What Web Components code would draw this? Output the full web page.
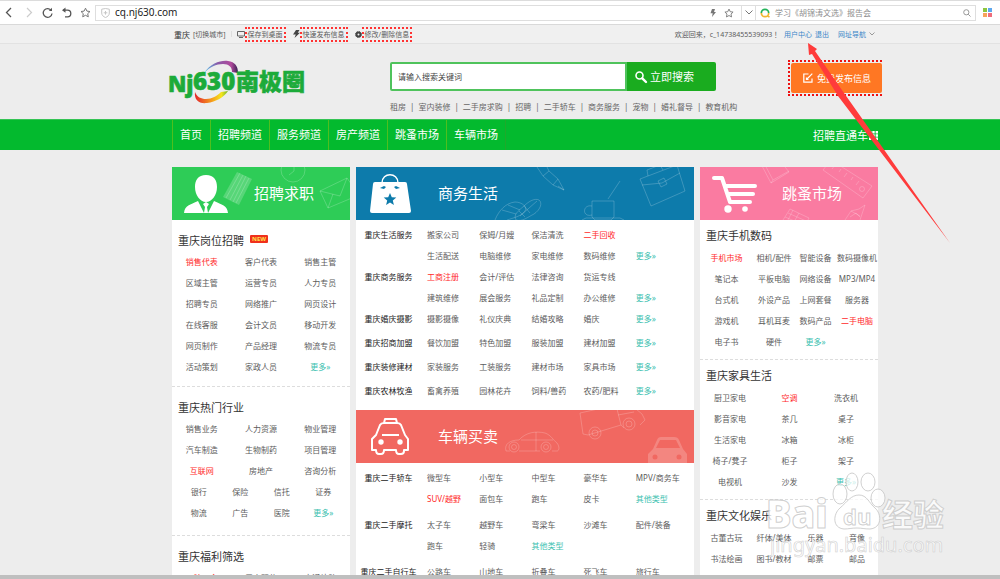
<!DOCTYPE html>
<html lang="zh-CN">
<head>
<meta charset="utf-8">
<title>重庆南极圈</title>
<style>
    html, body { height: 100%; }
    body {
        margin: 0;
        display: flex;
        flex-direction: column;
        overflow: hidden;
        background: #ededed;
        color: #5c5c5c;
        font: 8px/21px "Noto Sans", "Noto Sans CJK SC", sans-serif;
        --side: 172px;
        --end: 122px;
    }
    main {
        flex: 1;
        min-height: 0;
        overflow: hidden;
        border-bottom: 4px solid #bfbfbf;
    }
    .columns {
        display: grid;
        grid-template-columns: 178fr 338fr 178fr;
        gap: 6px;
        padding: 17px var(--end) 0 var(--side);
    }
</style>
</head>
<body>
<browser-bar></browser-bar>
<top-bar></top-bar>
<main>
    <site-header></site-header>
    <site-nav></site-nav>
    <div class="columns">
        <channel-panel kind="jobs" name="招聘求职">
            <link-section name="重庆岗位招聘" badge="NEW">
                <link-grid cols="1fr 1fr 1fr" items="*销售代表 客户代表 销售主管 区域主管 运营专员 人力专员 招聘专员 网络推广 网页设计 在线客服 会计文员 移动开发 网页制作 产品经理 物流专员 活动策划 家政人员 +更多»"></link-grid>
            </link-section>
            <link-section name="重庆热门行业">
                <link-grid cols="1fr 1fr 1fr" items="销售业务 人力资源 物业管理 汽车制造 生物制药 项目管理 *互联网 房地产 咨询分析"></link-grid>
                <link-grid class="inset" cols="1fr 1fr 1fr 1fr" items="银行 保险 信托 证券 物流 广告 医院 +更多»"></link-grid>
            </link-section>
            <link-section name="重庆福利筛选">
                <link-grid cols="1fr 1fr 1fr" items="*五险一金 周末双休 交通补助"></link-grid>
            </link-section>
        </channel-panel>
        <div>
            <channel-panel kind="business" name="商务生活">
                <service-list>
                    <service-row name="重庆生活服务" items="搬家公司 保姆/月嫂 保洁清洗 *二手回收 - 生活配送 电脑维修 家电维修 数码维修 +更多»"></service-row>
                    <service-row name="重庆商务服务" items="*工商注册 会计/评估 法律咨询 货运专线 - 建筑维修 展会服务 礼品定制 办公维修 +更多»"></service-row>
                    <service-row class="single" name="重庆婚庆摄影" items="摄影摄像 礼仪庆典 结婚攻略 婚庆 +更多»"></service-row>
                    <service-row class="single" name="重庆招商加盟" items="餐饮加盟 特色加盟 服装加盟 建材加盟 +更多»"></service-row>
                    <service-row class="single" name="重庆装修建材" items="家装服务 工装服务 建材市场 家具市场 +更多»"></service-row>
                    <service-row class="single" name="重庆农林牧渔" items="畜禽养殖 园林花卉 饲料/兽药 农药/肥料 +更多»"></service-row>
                </service-list>
            </channel-panel>
            <channel-panel kind="cars" name="车辆买卖">
                <service-list>
                    <service-row class="roomy" name="重庆二手轿车" items="微型车 小型车 中型车 豪华车 MPV/商务车 *SUV/越野 面包车 跑车 皮卡 +其他类型"></service-row>
                    <service-row class="roomy" name="重庆二手摩托" items="太子车 越野车 弯梁车 沙滩车 配件/装备 跑车 轻骑 +其他类型"></service-row>
                    <service-row class="roomy" name="重庆二手自行车" items="公路车 山地车 折叠车 死飞车 旅行车"></service-row>
                </service-list>
            </channel-panel>
        </div>
        <channel-panel kind="market" name="跳蚤市场">
            <link-section class="tight" name="重庆手机数码">
                <link-grid cols="53fr 42fr 41fr 42fr" items="*手机市场 相机/配件 智能设备 数码摄像机 笔记本 平板电脑 网络设备 MP3/MP4 台式机 外设产品 上网套餐 服务器 游戏机 耳机耳麦 数码产品 *二手电脑 电子书 硬件 +更多»"></link-grid>
            </link-section>
            <link-section class="tight" name="重庆家具生活">
                <link-grid cols="60fr 59fr 54fr 5fr" items="厨卫家电 *空调 洗衣机 - 影音家电 茶几 桌子 - 生活家电 冰箱 冰柜 - 椅子/凳子 柜子 架子 - 电视机 沙发 +更多»"></link-grid>
            </link-section>
            <link-section class="tight" name="重庆文化娱乐">
                <link-grid cols="53fr 42fr 41fr 42fr" items="古董古玩 纤体/美体 乐器 音像 书法绘画 图书/教材 邮票 邮品"></link-grid>
            </link-section>
        </channel-panel>
    </div>
</main>
<pointer-arrow></pointer-arrow>
<water-mark></water-mark>

<script>
const html = String.raw;

const base = html`
    <style>
        :host { display: block; box-sizing: border-box; }
        * { box-sizing: border-box; }
        a { color: inherit; text-decoration: none; white-space: nowrap; }
        svg { display: block; flex: none; overflow: visible; }
        button, input { font: inherit; margin: 0; }
    </style>
`;

class View extends HTMLElement {
    constructor() {
        super();
        this.attachShadow({mode: 'open'});
    }

    connectedCallback() {
        this.shadowRoot.innerHTML = base + this.render();
    }
}

// "*" marks a hot link, "+" a "more" link, "-" leaves a cell empty
function linkList(items) {
    return items.split(' ').map(item => {
        if (item === '-')
            return '<span></span>';
        const cls = {'*': 'hot', '+': 'more'}[item[0]];
        const text = cls ? item.slice(1) : item;
        return `<a href="#" class="${cls || ''}">${text}</a>`;
    }).join('');
}

customElements.define('browser-bar', class extends View {
    render() {
        return html`
            <style>
                :host { background: white; border-top: 1px solid #dcdcdc; border-bottom: 1px solid #d9d9d9; }
                .bar { display: flex; align-items: center; height: 23px; padding: 0 8px 0 4px; color: #777; }
                .tools { display: flex; gap: 8px; width: 91px; }
                .field { display: flex; align-items: center; height: 16px; border: 1px solid #dedede; }
                .address { flex: 1; padding: 0 5px; gap: 5px; }
                .drop { width: 13px; justify-content: center; border-left: 0; border-right: 0; }
                .search { width: 221px; padding: 0 4px; gap: 5px; margin-right: 7px; }
                input { flex: 1; min-width: 0; border: 0; padding: 0; outline: 0; height: 14px; background: none; }
                .address input { font-size: 10px; color: #222; }
                .search input::placeholder { color: #8d8d8d; opacity: 1; }
                button { border: 0; padding: 0; background: none; }
            </style>
            <div class="bar">
                <div class="tools">
                    <button aria-label="后退"><svg width="11" height="11" fill="none" stroke="#555" stroke-width="1.3"><path d="M7 1 2.500 5.500 7 10"/></svg></button>
                    <button aria-label="前进"><svg width="11" height="11" fill="none" stroke="#ccc" stroke-width="1.2"><path d="M4 1 8.500 5.500 4 10"/></svg></button>
                    <button aria-label="刷新"><svg width="11" height="11" fill="none" stroke="#555" stroke-width="1.300"><path d="M9.300 3.500A4.400 4.400 0 1 0 10 6.500"/><path d="M10 .8V4H6.800z" fill="#555" stroke="none"/></svg></button>
                    <button aria-label="恢复"><svg width="11" height="11" fill="none" stroke="#555" stroke-width="1.300"><path d="M2 3.200h4.500a3.300 3.300 0 0 1 0 6.600H4"/><path d="M4.500 .6v5.200L1 3.200z" fill="#555" stroke="none"/></svg></button>
                    <button aria-label="收藏"><svg width="11" height="11" fill="none" stroke="#777" stroke-linejoin="round"><path d="m5.500 1.200 1.400 2.900 3.100.4-2.300 2.200.6 3.100-2.800-1.500-2.800 1.500.6-3.100L1 4.500l3.100-.4z"/></svg></button>
                </div>
                <div class="field address">
                    <svg width="9" height="10" fill="none" stroke="#c6c6c6"><path d="M.7 1.200 4.500.5l3.800.7V5c0 2.200-1.600 3.700-3.800 4.500C2.300 8.700.7 7.200.7 5zM4.500 3v3.600M2.700 4.800h3.600"/></svg>
                    <input aria-label="地址" value="cq.nj630.com">
                    <svg width="6" height="8" fill="#777"><path d="M2 0h3L4 3h2L2 8l.7-3.800H.5z"/></svg>
                    <svg width="10" height="10" fill="none" stroke="#777" viewBox="0 0 11 11" style="margin: 0 2px 0 3px"><path d="m5.500 1.200 1.400 2.900 3.100.4-2.300 2.200.6 3.100-2.800-1.500-2.800 1.500.6-3.100L1 4.500l3.100-.4z"/></svg>
                </div>
                <div class="field drop"><svg width="8" height="5" fill="none" stroke="#777"><path d="m.5.5 3.500 3.500L7.500.5"/></svg></div>
                <div class="field search">
                    <svg width="10" height="10" fill="none" stroke-width="1.700"><path d="M8.700 5A3.700 3.700 0 0 0 1.300 5" stroke="#24b45a"/><path d="M1.300 5a3.700 3.700 0 0 0 7.400 0" stroke="#f2b632"/><path d="m7.500 8 2 1" stroke="#f2b632"/></svg>
                    <input aria-label="搜索" placeholder="学习《胡锦涛文选》报告会">
                    <svg width="8" height="8" fill="none" stroke="#999"><circle cx="3.300" cy="3.300" r="2.600"/><path d="m5.200 5.200 2.300 2.300"/></svg>
                </div>
                <svg width="9" height="9"><path fill="#8cc63f" d="M0 0h4v4H0z"/><path fill="#5da7ee" d="M5 0h4v4H5z"/><path fill="#f7a35c" d="M0 5h4v4H0z"/><path fill="#ef6d7c" d="M5 5h4v4H5z"/></svg>
            </div>
        `;
    }
});

customElements.define('top-bar', class extends View {
    render() {
        return html`
            <style>
                :host { border-bottom: 1px solid #e2e2e2; background: #f0f0f0; font-size: 7px; }
                .bar { display: flex; align-items: center; height: 18px; padding: 0 var(--end) 0 174px; line-height: 11px; }
                b { font-size: 8px; font-weight: 400; color: #333; margin-right: 3px; }
                .sep { width: 1px; height: 6px; background: #ddd; margin: 0 5px; }
                .mark { border: 2px dotted #f33; padding: 0 1px; margin-right: 7px; height: 15px; line-height: 12px; }
                .user { margin-left: auto; display: flex; align-items: center; gap: 3px; padding-right: 3px; white-space: nowrap; }
                .user a { color: #3b86c8; }
                .user .guide { margin-left: 6px; }
            </style>
            <div class="bar">
                <b>重庆</b><a href="#">[切换城市]</a>
                <span class="sep"></span>
                <svg width="8" height="7" fill="none" stroke="#666"><path d="M.5.500h7v4.500h-7zM2 6.500h4"/></svg>
                <a href="#" class="mark">保存到桌面</a>
                <svg width="7" height="8" fill="#444"><path d="M3 0h3.500L4.800 2.700H7L1.500 8l1.300-3.500H0z"/></svg>
                <a href="#" class="mark">快速发布信息</a>
                <svg width="7" height="7" fill="none" stroke="#444"><circle cx="3.500" cy="3.500" r="2" stroke-width="2"/><circle cx="3.500" cy="3.500" r="3" stroke-dasharray="1.200 1.150"/></svg>
                <a href="#" class="mark">修改/删除信息</a>
                <div class="user">
                    <span>欢迎回来，c_14738455539093 ！</span>
                    <a href="#">用户中心</a>
                    <a href="#">退出</a>
                    <a href="#" class="guide">网址导航</a>
                    <svg width="6" height="4" fill="none" stroke="#999"><path d="m.5.500 2.500 2.500L5.500.500"/></svg>
                </div>
            </div>
        `;
    }
});

customElements.define('site-logo', class extends View {
    render() {
        return html`
            <style>
                text { fill: #1cab3a; stroke: #1cab3a; stroke-width: .6; font-weight: 800; }
                .latin { font-family: "Open Sans", "Noto Sans", sans-serif; font-size: 24px; }
                .first { font-size: 22px; }
                .cjk { font-family: "Noto Sans CJK SC", sans-serif; font-size: 23px; font-weight: 900; }
            </style>
            <svg width="134" height="45" viewBox="12 9 134 45" role="img" aria-label="Nj630南极圈">
                <defs>
                    <linearGradient id="top"><stop offset="0" stop-color="#57c7ee"/><stop offset=".4" stop-color="#8a5aa8"/><stop offset=".8" stop-color="#b04a9c"/><stop offset="1" stop-color="#352050"/></linearGradient>
                    <linearGradient id="low"><stop offset="0" stop-color="#e3262e"/><stop offset=".5" stop-color="#f59a1c"/><stop offset=".8" stop-color="#f6e51c"/><stop offset="1" stop-color="#6ab82e"/></linearGradient>
                </defs>
                <path d="M44 22C51 12 61 9 68 10c7 1 10 5 10 12l-6-1c0-5-3-8-9-8-7 0-13 3-19 9z" fill="url(#top)"/>
                <path d="M35 41c-1 8 4 12 12 11 9-1 17-6 21-12l-7 1c-4 4-9 7-15 7-5 0-9-2-11-7z" fill="url(#low)"/>
                <text class="latin first" x="8" y="41">Nj</text>
                <text class="latin" x="33" y="39">630</text>
                <text class="cjk" x="76" y="39">南极圈</text>
            </svg>
        `;
    }
});

customElements.define('site-header', class extends View {
    render() {
        const tags = '租房 室内装修 二手房求购 招聘 二手轿车 商务服务 宠物 婚礼督导 教育机构'.split(' ');
        return html`
            <style>
                :host { padding: 16px var(--end) 0 var(--side); height: 75px; }
                .row { display: grid; grid-template-columns: 218fr 326fr 162fr; }
                .row > * { min-width: 0; }
                form { display: flex; height: 29px; margin: 2px 0 0; }
                input { flex: 1; min-width: 0; border: 2px solid #4fc35c; padding: 0 6px; outline: 0; background: white; border-radius: 2px 0 0 2px; }
                input::placeholder { color: #444; opacity: 1; }
                form button { width: 89px; border: 0; background: #1aac1f; color: white; font-size: 11px; display: flex; align-items: center; gap: 3px; padding: 0 8px; border-radius: 0 2px 2px 0; }
                .tags { display: flex; white-space: nowrap; line-height: 12px; margin-top: 10px; color: #666; }
                .tags span { margin: 0 4px; }
                .post { justify-self: end; align-self: start; border: 2px dotted #e11; border-right: 0; margin-right: -4px; padding: 1px 0 1px 1px; }
                .post button { display: flex; align-items: center; gap: 4px; height: 30px; width: 91px; padding: 0 0 0 12px; border: 0; border-radius: 2px; background: #ff7723; color: white; font-size: 9px; white-space: nowrap; }
            </style>
            <div class="row">
                <site-logo></site-logo>
                <div>
                    <form>
                        <input aria-label="搜索关键词" placeholder="请输入搜索关键词">
                        <button type="button">
                            <svg width="12" height="12" fill="none" stroke="white"><circle cx="4.500" cy="4.500" r="3.500" stroke-width="1.600"/><path d="m7.300 7.300 3.700 3.700" stroke-width="2.400" stroke-linecap="round"/></svg>
                            立即搜索
                        </button>
                    </form>
                    <div class="tags">${tags.map(t => `<a href="#">${t}</a>`).join('<span>|</span>')}</div>
                </div>
                <div class="post">
                    <button type="button">
                        <svg width="10" height="10" fill="none" stroke="white" stroke-width="1.200"><path d="M5.500 1H.800v8.200H9V5.500M3.500 6.500 9.300.700M3.500 4.500v2h2"/></svg>
                        免费发布信息
                    </button>
                </div>
            </div>
        `;
    }
});

customElements.define('site-nav', class extends View {
    render() {
        const names = '首页 招聘频道 服务频道 房产频道 跳蚤市场 车辆市场'.split(' ');
        return html`
            <style>
                :host { background: #03ba2e; border-top: 1px solid #35c455; color: white; font-size: 11px; padding: 0 var(--end) 0 var(--side); }
                nav { display: flex; line-height: 29px; height: 30px; }
                nav a { padding: 0 7px; border-left: 1px solid #4fbf1e; }
                nav a:first-of-type { padding-right: 8px; }
                nav a:nth-of-type(6) { border-right: 1px solid #1fa92b; }
                nav a.direct { margin-left: auto; padding: 0; border: 0; display: flex; align-items: center; gap: 1px; }
            </style>
            <nav>
                ${names.map(n => `<a href="#">${n}</a>`).join('')}
                <a href="#" class="direct">招聘直通车
                    <svg width="9" height="9" fill="none" stroke="white" stroke-width="2.400" stroke-dasharray="2.400 .9"><path d="M0 1.200h9M0 4.500h9M0 7.800h9"/></svg>
                </a>
            </nav>
        `;
    }
});

const banners = {
    jobs: {
        color: '#2ecc57',
        art: html`
            <g class="line">
                <circle cx="121" cy="3" r="12"/><path d="M122-4v8l-5 4"/>
                <path d="m148 24 27-13 12 17-31 13zM148 24l20 5 7-18M156 41l5-14"/>
            </g>
            <path class="tint" d="m65 5 15 7-13 26-16-8z"/>
            <path class="line" d="M68 6 54 31M71 8 58 33M74 9 61 35M77 11 64 36"/>
            <path d="M34 8c8 0 11 5 11 12 0 8-5 15-11 15s-11-7-11-15c0-7 3-12 11-12zM12 46c1-8 6-8 14-12l6 12 1-6-2-3 3-2 3 2-2 3 1 6 6-12c8 4 13 4 14 12z"/>`,
    },
    business: {
        color: '#0d7bab',
        art: html`
            <g class="line">
                <path d="m181 0 6 9 10 9 11 5-6-11-9-8-2-4M187 9l6-5M197 18l5-6M202 19l6 4"/>
                <path d="m284 12 37-14 8 26-34 15zM286 18l20-2 18-10M292 9l-1-6 13-5 3 5M302 14l6-3 3 6-6 3z"/>
                <path d="M236 34h22v16l-3 3h-16l-3-3zM236 39c-10-2-10 12 0 9M252 32l12-18M226 53l4-2h34l4 2"/>
                <path d="M160 53c-3-5 2-9 8-14 5-5 11-8 15-6 4 3 1 10-5 14-6 3-12 8-18 6zM164 49l17-15M163 44l6 6M168 39l6 7"/>
                <path d="M139 53c4-10 11-17 20-18 7 0 13 5 10 9-3 5-12 7-18 9M146 43l14 4M152 38l12 5"/>
            </g>
            <path d="M19 15h30q2 0 2 2l4 27q0 2-2 2H16q-2 0-2-2l3-27q0-2 2-2z"/>
            <path d="M26 16c0-11 16-11 16 0" fill="none" stroke="white" stroke-width="1.500"/>
            <g fill="#0d7bab"><path d="m34 26 1.800 4.200 4.500.4-3.500 3 1.100 4.400-3.900-2.400-3.900 2.400 1.100-4.400-3.500-3 4.500-.4z"/><path d="m24 21 4-2 2 1-2 2zM44 21l-4-2-2 1 2 2z"/></g>`,
    },
    cars: {
        color: '#f16861',
        art: html`
            <g class="line">
                <path d="M154 41h-4c-2-7 4-11 13-11 7-8 17-9 26-7 6 2 8 7 12 10 3 4 2 8 0 8h-5M163 41h21M165 30h32M180 22v19"/>
                <circle cx="158" cy="37" r="5"/><circle cx="190" cy="37" r="5"/><circle cx="158" cy="37" r="2.500"/><circle cx="190" cy="37" r="2.500"/>
                <path d="m224 3 36-8 5 20-33 10-5-1zM260-4l14-2 12 10 3 6-5 5M265 15l3 3M262 5l16-3"/>
                <circle cx="239" cy="23" r="6"/><circle cx="273" cy="14" r="6"/><circle cx="239" cy="23" r="3"/><circle cx="273" cy="14" r="3"/>
            </g>
            <path class="tint" fill-rule="evenodd" d="M292 53v-9l5-5 4-9q1-3 4-3h13q4 0 5 3l4 9 4 5v9zM300 38h24l-4-8h-16z"/>
            <g fill="#f16861"><circle cx="299" cy="47" r="2.500"/><circle cx="323" cy="47" r="2.500"/></g>
            <path d="m20 25 4-10q1-2 4-2h13q3 0 4 2l4 10 3 4v11h-4v1q0 3-3 3h-2q-3 0-3-4h-12q0 4-3 4h-2q-3 0-3-4h-4V29zM28 13l1-4h11l1 4M26 25h17" fill="none" stroke="white" stroke-width="2" stroke-linejoin="round"/>
            <circle cx="25" cy="32" r="2.700"/><circle cx="44" cy="32" r="2.700"/>`,
    },
    market: {
        color: '#fa7ba1',
        art: html`
            <g class="line">
                <path d="m61-3 10 19 18-11-8-10M64-4l9 17M71 16l2-3 16-9"/>
                <path d="m123 3 8-10 41 26-9 12zM129-5l-2 3M135-2l-3 4M141 2l-2 3M147 6l-3 4M153 10l-2 3M159 14l-3 4"/><circle cx="162" cy="22" r="2.500"/>
                <path d="m83 53 7-11 19 9-2 4M85 50l19 8M88 46l18 8M93 43l-5 10M99 46l-5 9"/>
                <path d="m145 53 6-9 8-2 6-4-2 6-3 9M151 44l9 5M150 50l6-4 4 4"/>
            </g>
            <path d="M14 11h8l8 24h20M26 19h29M28 27h25" fill="none" stroke="white" stroke-width="4" stroke-linecap="round" stroke-linejoin="round"/>
            <circle cx="28" cy="42" r="3.700"/><circle cx="45" cy="42" r="2.800"/>`,
    },
};

customElements.define('channel-panel', class extends View {
    render() {
        const {color, art} = banners[this.getAttribute('kind')];
        return html`
            <style>
                :host { background: white; }
                header { display: flex; align-items: center; height: 53px; overflow: hidden; background: ${color}; }
                header > svg { width: 82px; height: 53px; fill: white; }
                h2 { margin: 0; font-size: 15px; font-weight: 400; color: white; position: relative; white-space: nowrap; }
                .line { fill: none; stroke: white; stroke-opacity: .25; stroke-width: .8; }
                .tint { fill: white; fill-opacity: .2; }
            </style>
            <header>
                <svg viewBox="0 0 82 53" aria-hidden="true">${art}</svg>
                <h2>${this.getAttribute('name')}</h2>
            </header>
            <slot></slot>
        `;
    }
});

customElements.define('link-section', class extends View {
    render() {
        const badge = this.getAttribute('badge');
        return html`
            <style>
                :host { padding: 11px 0 9px; border-bottom: 1px dashed #ddd; }
                :host(.tight) { padding: 5px 0 7px; }
                :host(:last-of-type) { border-bottom: 0; }
                h3 { margin: 0; padding: 0 6px; font-size: 11px; line-height: 20px; font-weight: 400; color: #333; display: flex; gap: 6px; }
                :host(.tight) h3 { line-height: 22px; }
                .badge { align-self: start; margin-top: 4px; padding: 0 2px; border-radius: 1px; background: #f0301c; color: #ffe14a; font-size: 6px; line-height: 8px; font-weight: 700; }
            </style>
            <h3>${this.getAttribute('name')}${badge ? `<span class="badge">${badge}</span>` : ''}</h3>
            <slot></slot>
        `;
    }
});

customElements.define('link-grid', class extends View {
    render() {
        return html`
            <style>
                :host(.inset) { padding: 0 6px 3px; }
                .grid { display: grid; grid-template-columns: ${this.getAttribute('cols')}; text-align: center; }
                .grid > * { min-width: 0; display: flex; justify-content: center; }
                .hot { color: #ff2a2a; }
                .more { color: #3cbfb0; }
            </style>
            <div class="grid">${linkList(this.getAttribute('items'))}</div>
        `;
    }
});

customElements.define('service-list', class extends View {
    render() {
        return html`
            <style>:host { padding: 4px 0 6px; }</style>
            <slot></slot>
        `;
    }
});

customElements.define('service-row', class extends View {
    render() {
        return html`
            <style>
                :host { display: grid; grid-template-columns: 65px 1fr; }
                :host(.single) { padding-bottom: 3px; }
                :host(.roomy) { padding-bottom: 5px; }
                h4 { margin: 0; font-size: inherit; font-weight: 400; color: #222; text-align: center; white-space: nowrap; }
                .links { display: grid; grid-template-columns: repeat(5, 1fr); margin: 0 6px; }
                .links > * { min-width: 0; }
                .hot { color: #ff2a2a; }
                .more { color: #3cbfb0; }
            </style>
            <h4>${this.getAttribute('name')}</h4>
            <div class="links">${linkList(this.getAttribute('items'))}</div>
        `;
    }
});

// annotation arrow that lies over the page
customElements.define('pointer-arrow', class extends View {
    render() {
        return html`
            <style>:host { position: absolute; left: 806px; top: 42px; pointer-events: none; }</style>
            <svg width="146" height="204" fill="#ff3b3b"><path d="m2 1 9 6-2 2 29 42 106 150L32 54 6 12l-3 1z"/></svg>
        `;
    }
});

customElements.define('water-mark', class extends View {
    render() {
        return html`
            <style>
                :host { position: absolute; right: 50px; bottom: 16px; pointer-events: none; }
                svg { fill: white; fill-opacity: .75; stroke: #c4c4c4; stroke-opacity: .8; stroke-width: 1; }
                .big { font: 800 38px "Open Sans", sans-serif; }
                .du { font: 700 22px "Open Sans", sans-serif; }
                .cjk { font: 700 31px "Noto Sans CJK SC", sans-serif; }
                .url { font: 400 20px "Noto Sans", sans-serif; stroke-width: .6; }
            </style>
            <svg width="182" height="92" viewBox="0 0 182 92">
                <text class="big" x="-2" y="57">Bai</text>
                <ellipse cx="72" cy="23" rx="7" ry="10"/>
                <ellipse cx="84" cy="11" rx="6" ry="9"/>
                <ellipse cx="100" cy="11" rx="7" ry="9"/>
                <ellipse cx="110" cy="27" rx="7" ry="9"/>
                <path d="M91 24c8 0 10 8 16 13 7 6 7 20-5 21-6 0-8-1-13-1-6 0-8 1-13 1-12-1-11-15-4-21 7-6 11-13 19-13z"/>
                <text class="du" x="75" y="54">du</text>
                <text class="cjk" x="114" y="55">经验</text>
                <text class="url" x="2" y="81">jingyan.baidu.com</text>
            </svg>
        `;
    }
});
</script>
</body>
</html>
